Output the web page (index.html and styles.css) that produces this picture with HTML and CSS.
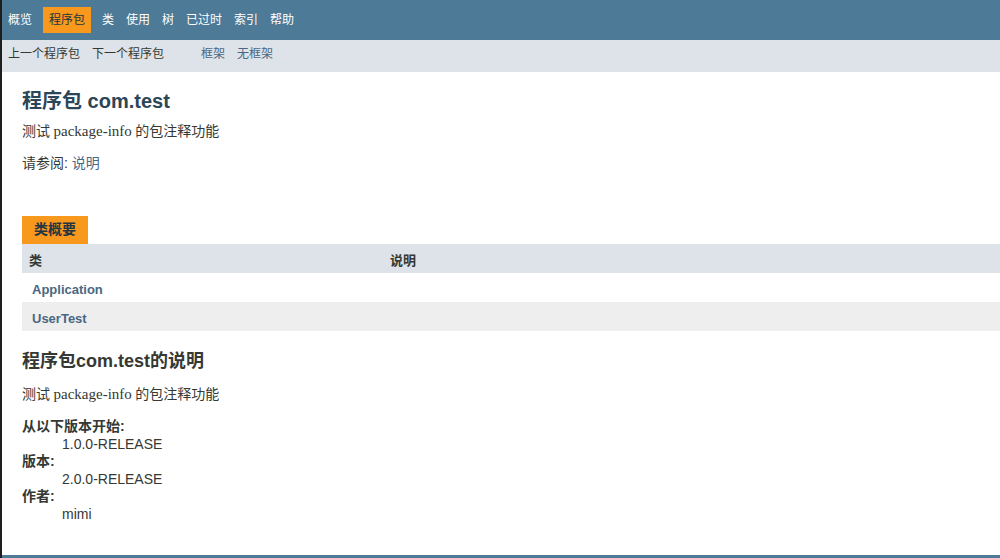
FILE: index.html
```html
<!DOCTYPE html>
<html lang="zh-CN">
<head>
<meta charset="utf-8">
<title>com.test</title>
<link rel="stylesheet" href="styles.css">
</head>
<body>
<div class="page">
  <div class="topNav">
    <ul class="navList">
      <li>概览</li>
      <li class="navBarCell1Rev">程序包</li>
      <li>类</li>
      <li>使用</li>
      <li>树</li>
      <li>已过时</li>
      <li>索引</li>
      <li>帮助</li>
    </ul>
  </div>
  <div class="subNav">
    <ul class="subList first">
      <li>上一个程序包</li>
      <li>下一个程序包</li>
    </ul>
    <ul class="subList">
      <li><a class="link">框架</a></li>
      <li><a class="link">无框架</a></li>
    </ul>
  </div>
  <div class="main">
    <div class="header">
      <h1 class="title">程序包 com.test</h1>
      <div class="block summaryBlock">测试 <span class="term">package-info</span> 的包注释功能</div>
      <p class="seeAlso">请参阅: <a class="link">说明</a></p>
    </div>
    <div class="contentContainer">
      <div class="caption"><span>类概要</span></div>
      <table class="overviewSummary">
        <colgroup>
          <col class="colA">
          <col class="colB">
        </colgroup>
        <thead>
          <tr><th class="colFirst">类</th><th class="colLast">说明</th></tr>
        </thead>
        <tbody>
          <tr class="altColor"><td class="colFirst"><a class="strongLink">Application</a></td><td class="colLast"></td></tr>
          <tr class="rowColor"><td class="colFirst"><a class="strongLink">UserTest</a></td><td class="colLast"></td></tr>
        </tbody>
      </table>
    </div>
    <div class="description">
      <h2 class="descTitle">程序包com.test的说明</h2>
      <div class="block descBlock">测试 <span class="term">package-info</span> 的包注释功能</div>
      <dl class="tags">
        <dt>从以下版本开始:</dt>
        <dd>1.0.0-RELEASE</dd>
        <dt>版本:</dt>
        <dd>2.0.0-RELEASE</dd>
        <dt>作者:</dt>
        <dd>mimi</dd>
      </dl>
    </div>
  </div>
  <div class="bottomNav"></div>
</div>
</body>
</html>
```

FILE: styles.css
```css
html, body {
  margin: 0;
  padding: 0;
  overflow: hidden;
  background: #ffffff;
}

body {
  font-family: "Liberation Sans", "Noto Sans CJK SC", sans-serif;
  font-size: 14px;
  color: #353833;
}

.page {
  height: 558px;
  box-sizing: border-box;
  border-left: 2px solid #1e1e1e;
  display: flex;
  flex-direction: column;
  overflow: hidden;
}

.topNav {
  flex: 0 0 40px;
  box-sizing: border-box;
  background: #4d7a97;
  padding-top: 7px;
}

.navList {
  display: flex;
  margin: 0;
  padding: 0;
  list-style: none;
}

.navList li {
  padding: 5px 6px;
  font-size: 12px;
  line-height: 16px;
  color: #ffffff;
}

.navList li.navBarCell1Rev {
  background: #f8981d;
  color: #253441;
  margin: 0 5px;
}

.subNav {
  flex: 0 0 32px;
  box-sizing: border-box;
  background: #dee3e9;
  padding-top: 6px;
  display: flex;
}

.subList {
  display: flex;
  margin: 0;
  padding: 0;
  list-style: none;
}

.subList.first {
  margin-right: 25px;
}

.subList li {
  padding: 0 6px;
  font-size: 12px;
  line-height: 16px;
  color: #353833;
}

.link {
  color: #4a6782;
  text-decoration: none;
}

.main {
  flex: 1 1 auto;
  min-height: 0;
}

.header {
  padding: 0 20px;
}

.title {
  margin: 17px 0 0 0;
  font-size: 20px;
  line-height: 24px;
  font-weight: bold;
  color: #2c4557;
}

.block {
  font-family: "Liberation Serif", "Noto Sans CJK SC", serif;
  font-size: 14px;
  line-height: 18px;
  color: #353833;
}

.term {
  font-size: 15px;
  line-height: 1;
}

.summaryBlock {
  margin-top: 10px;
}

.seeAlso {
  margin: 13px 0 0 0;
  font-size: 14px;
  line-height: 18px;
}

.contentContainer {
  padding: 44px 0 0 20px;
}

.caption {
  display: flex;
}

.caption span {
  background: #f8981d;
  color: #253441;
  font-size: 14px;
  font-weight: bold;
  line-height: 16px;
  height: 16px;
  padding: 5px 12px 7px 12px;
}

.overviewSummary {
  width: 100%;
  border-collapse: collapse;
  border-spacing: 0;
  table-layout: fixed;
}

.colA {
  width: 361px;
}

.overviewSummary th {
  background: #dee3e9;
  text-align: left;
  font-size: 13px;
  font-weight: bold;
  line-height: 18px;
  padding: 8px 3px 3px 7px;
  color: #353833;
}

.overviewSummary td {
  font-size: 13px;
  line-height: 18px;
  padding: 8px 3px 3px 10px;
}

.altColor {
  background: #ffffff;
}

.rowColor {
  background: #eeeeef;
}

.strongLink {
  color: #4a6782;
  font-weight: bold;
  text-decoration: none;
}

.description {
  padding: 0 20px;
}

.descTitle {
  margin: 19px 0 0 0;
  font-size: 18px;
  line-height: 22px;
  font-weight: bold;
  color: #353833;
}

.descBlock {
  margin-top: 14px;
}

.tags {
  margin: 14px 0 0 0;
}

.tags dt {
  font-size: 14px;
  line-height: 17px;
  font-weight: bold;
  color: #353833;
}

.tags dd {
  margin: 0 0 0 40px;
  font-size: 14px;
  line-height: 18px;
  color: #353833;
}

.bottomNav {
  flex: 0 0 3px;
  background: #4d7a97;
}
```
